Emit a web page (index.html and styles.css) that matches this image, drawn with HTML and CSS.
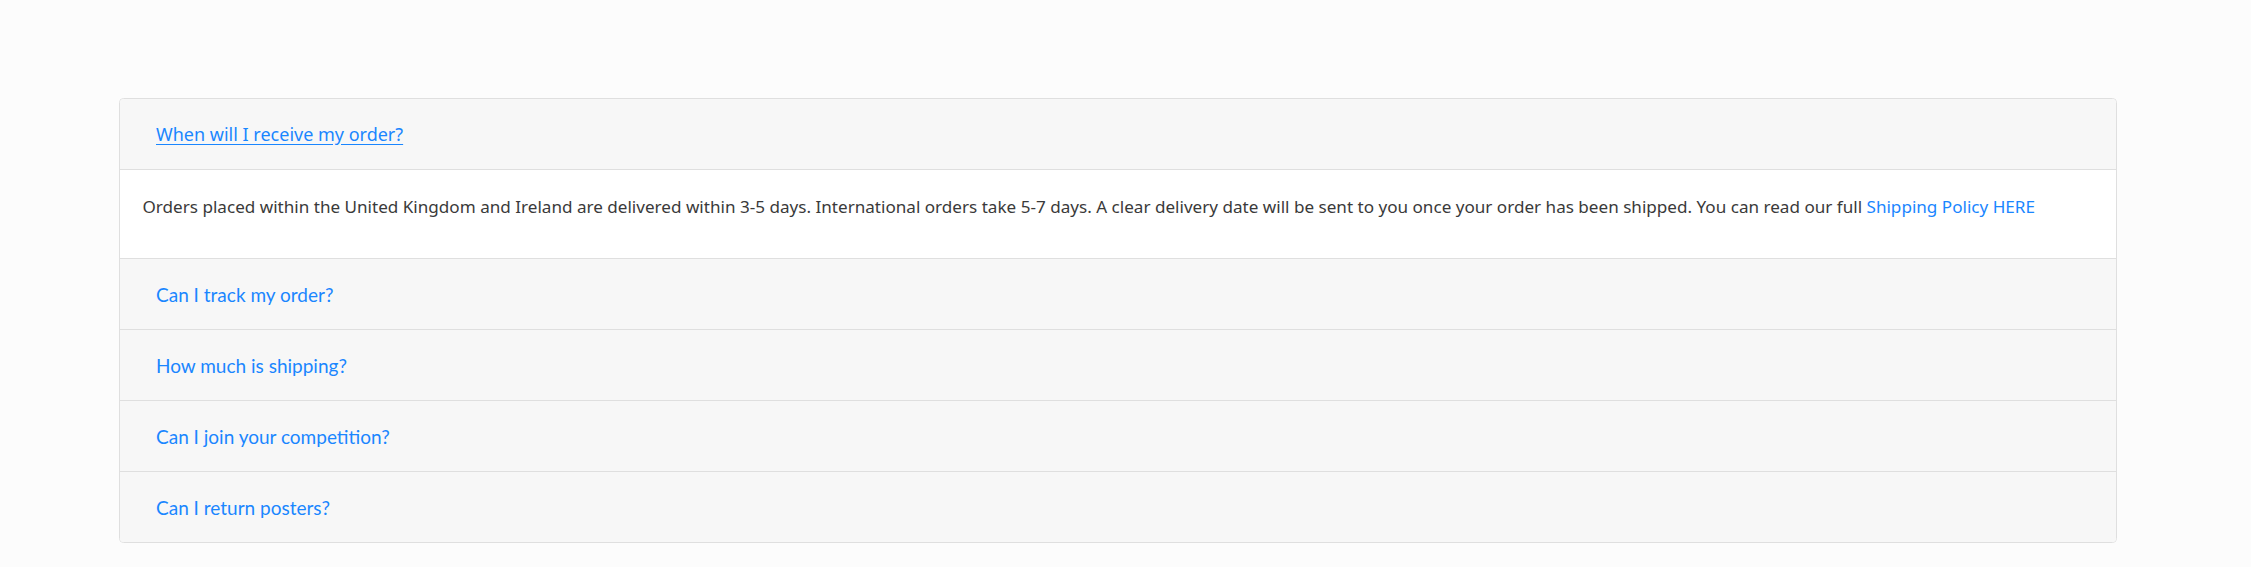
FILE: index.html
```html
<!DOCTYPE html>
<html lang="en">
<head>
<meta charset="utf-8">
<title>FAQ</title>
<link rel="stylesheet" href="styles.css">
</head>
<body>
<div class="page">
  <div class="accordion">
    <div class="item">
      <div class="header"><a class="toggle toggle-open" href="#">When will I receive my order?</a></div>
      <div class="body">
        <p>Orders placed within the United Kingdom and Ireland are delivered within 3-5 days. International orders take 5-7 days. A clear delivery date will be sent to you once your order has been shipped. You can read our full <a class="link" href="#">Shipping Policy HERE</a></p>
      </div>
    </div>
    <div class="item">
      <div class="header"><a class="toggle" href="#">Can I track my order?</a></div>
    </div>
    <div class="item">
      <div class="header"><a class="toggle" href="#">How much is shipping?</a></div>
    </div>
    <div class="item">
      <div class="header"><a class="toggle" href="#">Can I join your competition?</a></div>
    </div>
    <div class="item">
      <div class="header"><a class="toggle" href="#">Can I return posters?</a></div>
    </div>
  </div>
</div>
</body>
</html>
```

FILE: styles.css
```css
html, body {
  margin: 0;
  padding: 0;
  background: #fcfcfc;
}
.page {
  padding: 98px 0 0 119px;
}
.accordion {
  width: 1998px;
  box-sizing: border-box;
  border: 1px solid #dfdfdf;
  border-radius: 4.5px;
  overflow: hidden;
  background: #fff;
}
.item + .item {
  border-top: 1px solid #dfdfdf;
}
.header {
  height: 70px;
  box-sizing: border-box;
  padding: 0 22.5px;
  background: #f7f7f7;
  display: flex;
  align-items: center;
}
.toggle {
  padding: 0 13.5px;
  font-family: "Lato", "Noto Sans", sans-serif;
  font-size: 19px;
  line-height: 27px;
  color: #1a86ff;
  text-decoration: none;
}
.toggle-open {
  font-family: "Noto Sans", sans-serif;
  font-size: 18px;
  text-decoration: underline;
  text-underline-offset: 3px;
}
.body {
  border-top: 1px solid #dfdfdf;
  padding: 22.5px 22.5px;
  height: 89px;
  box-sizing: border-box;
}
.body p {
  margin: 0;
  font-family: "Noto Sans", sans-serif;
  font-size: 17.1px;
  line-height: 27px;
  color: #3a3a3a;
  white-space: nowrap;
}
.link {
  color: #1a86ff;
  text-decoration: none;
}
```
